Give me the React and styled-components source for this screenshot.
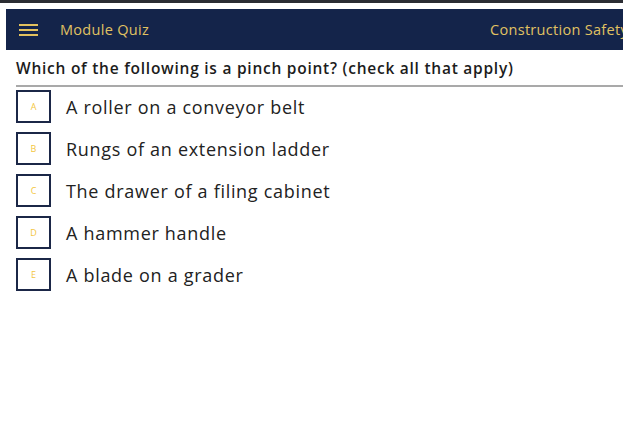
import React from "react";
import styled, { createGlobalStyle } from "styled-components";

const GlobalStyle = createGlobalStyle`
  html, body {
    margin: 0;
    padding: 0;
    background: #ffffff;
    font-family: "Open Sans", "Noto Sans", sans-serif;
    overflow: hidden;
  }
`;

const options = [
  { letter: "A", text: "A roller on a conveyor belt" },
  { letter: "B", text: "Rungs of an extension ladder" },
  { letter: "C", text: "The drawer of a filing cabinet" },
  { letter: "D", text: "A hammer handle" },
  { letter: "E", text: "A blade on a grader" },
];

const App = () => {
  return (
    <React.Fragment>
      <GlobalStyle />
      <Page>
        <TopStrip />
        <Header>
          <Menu>
            <span />
            <span />
            <span />
          </Menu>
          <HeaderTitle>Module Quiz</HeaderTitle>
          <Course>Construction Safety</Course>
        </Header>
        <Body>
          <Question>Which of the following is a pinch point? (check all that apply)</Question>
          <Options>
            {options.map((o) => (
              <Option key={o.letter}>
                <Box>{o.letter}</Box>
                <Label>{o.text}</Label>
              </Option>
            ))}
          </Options>
        </Body>
      </Page>
    </React.Fragment>
  );
};

const Page = styled.div`
  width: 623px;
  height: 447px;
  background: #fff;
`;
const TopStrip = styled.div`
  height: 3px;
  background: #2b2d33;
  margin-bottom: 6px;
`;
const Header = styled.div`
  display: flex;
  align-items: center;
  height: 41px;
  margin-left: 6px;
  background: #14244a;
  white-space: nowrap;
  overflow: hidden;
`;
const Menu = styled.div`
  display: flex;
  flex-direction: column;
  gap: 3px;
  width: 19px;
  margin-left: 13px;
  span {
    display: block;
    height: 2px;
    background: #e3c15e;
  }
`;
const HeaderTitle = styled.div`
  margin-left: 22px;
  font-size: 14.5px;
  letter-spacing: 0.3px;
  color: #e0c262;
  flex: 1;
`;
const Course = styled.div`
  font-size: 14.5px;
  letter-spacing: 0.3px;
  color: #e0c262;
  margin-right: -5px;
`;
const Body = styled.div`
  padding: 0 0 0 16px;
`;
const Question = styled.div`
  font-weight: 600;
  font-size: 15.5px;
  letter-spacing: 0.75px;
  color: #1c1c1c;
  padding: 7px 0 6px;
  border-bottom: 2px solid #a9a9a9;
`;
const Options = styled.div`
  display: flex;
  flex-direction: column;
  gap: 9px;
  padding-top: 3px;
`;
const Option = styled.div`
  display: flex;
  align-items: center;
`;
const Box = styled.div`
  width: 31px;
  height: 29px;
  border: 2px solid #1b2747;
  display: flex;
  align-items: center;
  justify-content: center;
  font-size: 9px;
  color: #f3c640;
`;
const Label = styled.div`
  margin-left: 15px;
  font-size: 18px;
  letter-spacing: 0.7px;
  color: #222;
`;

export default App;
